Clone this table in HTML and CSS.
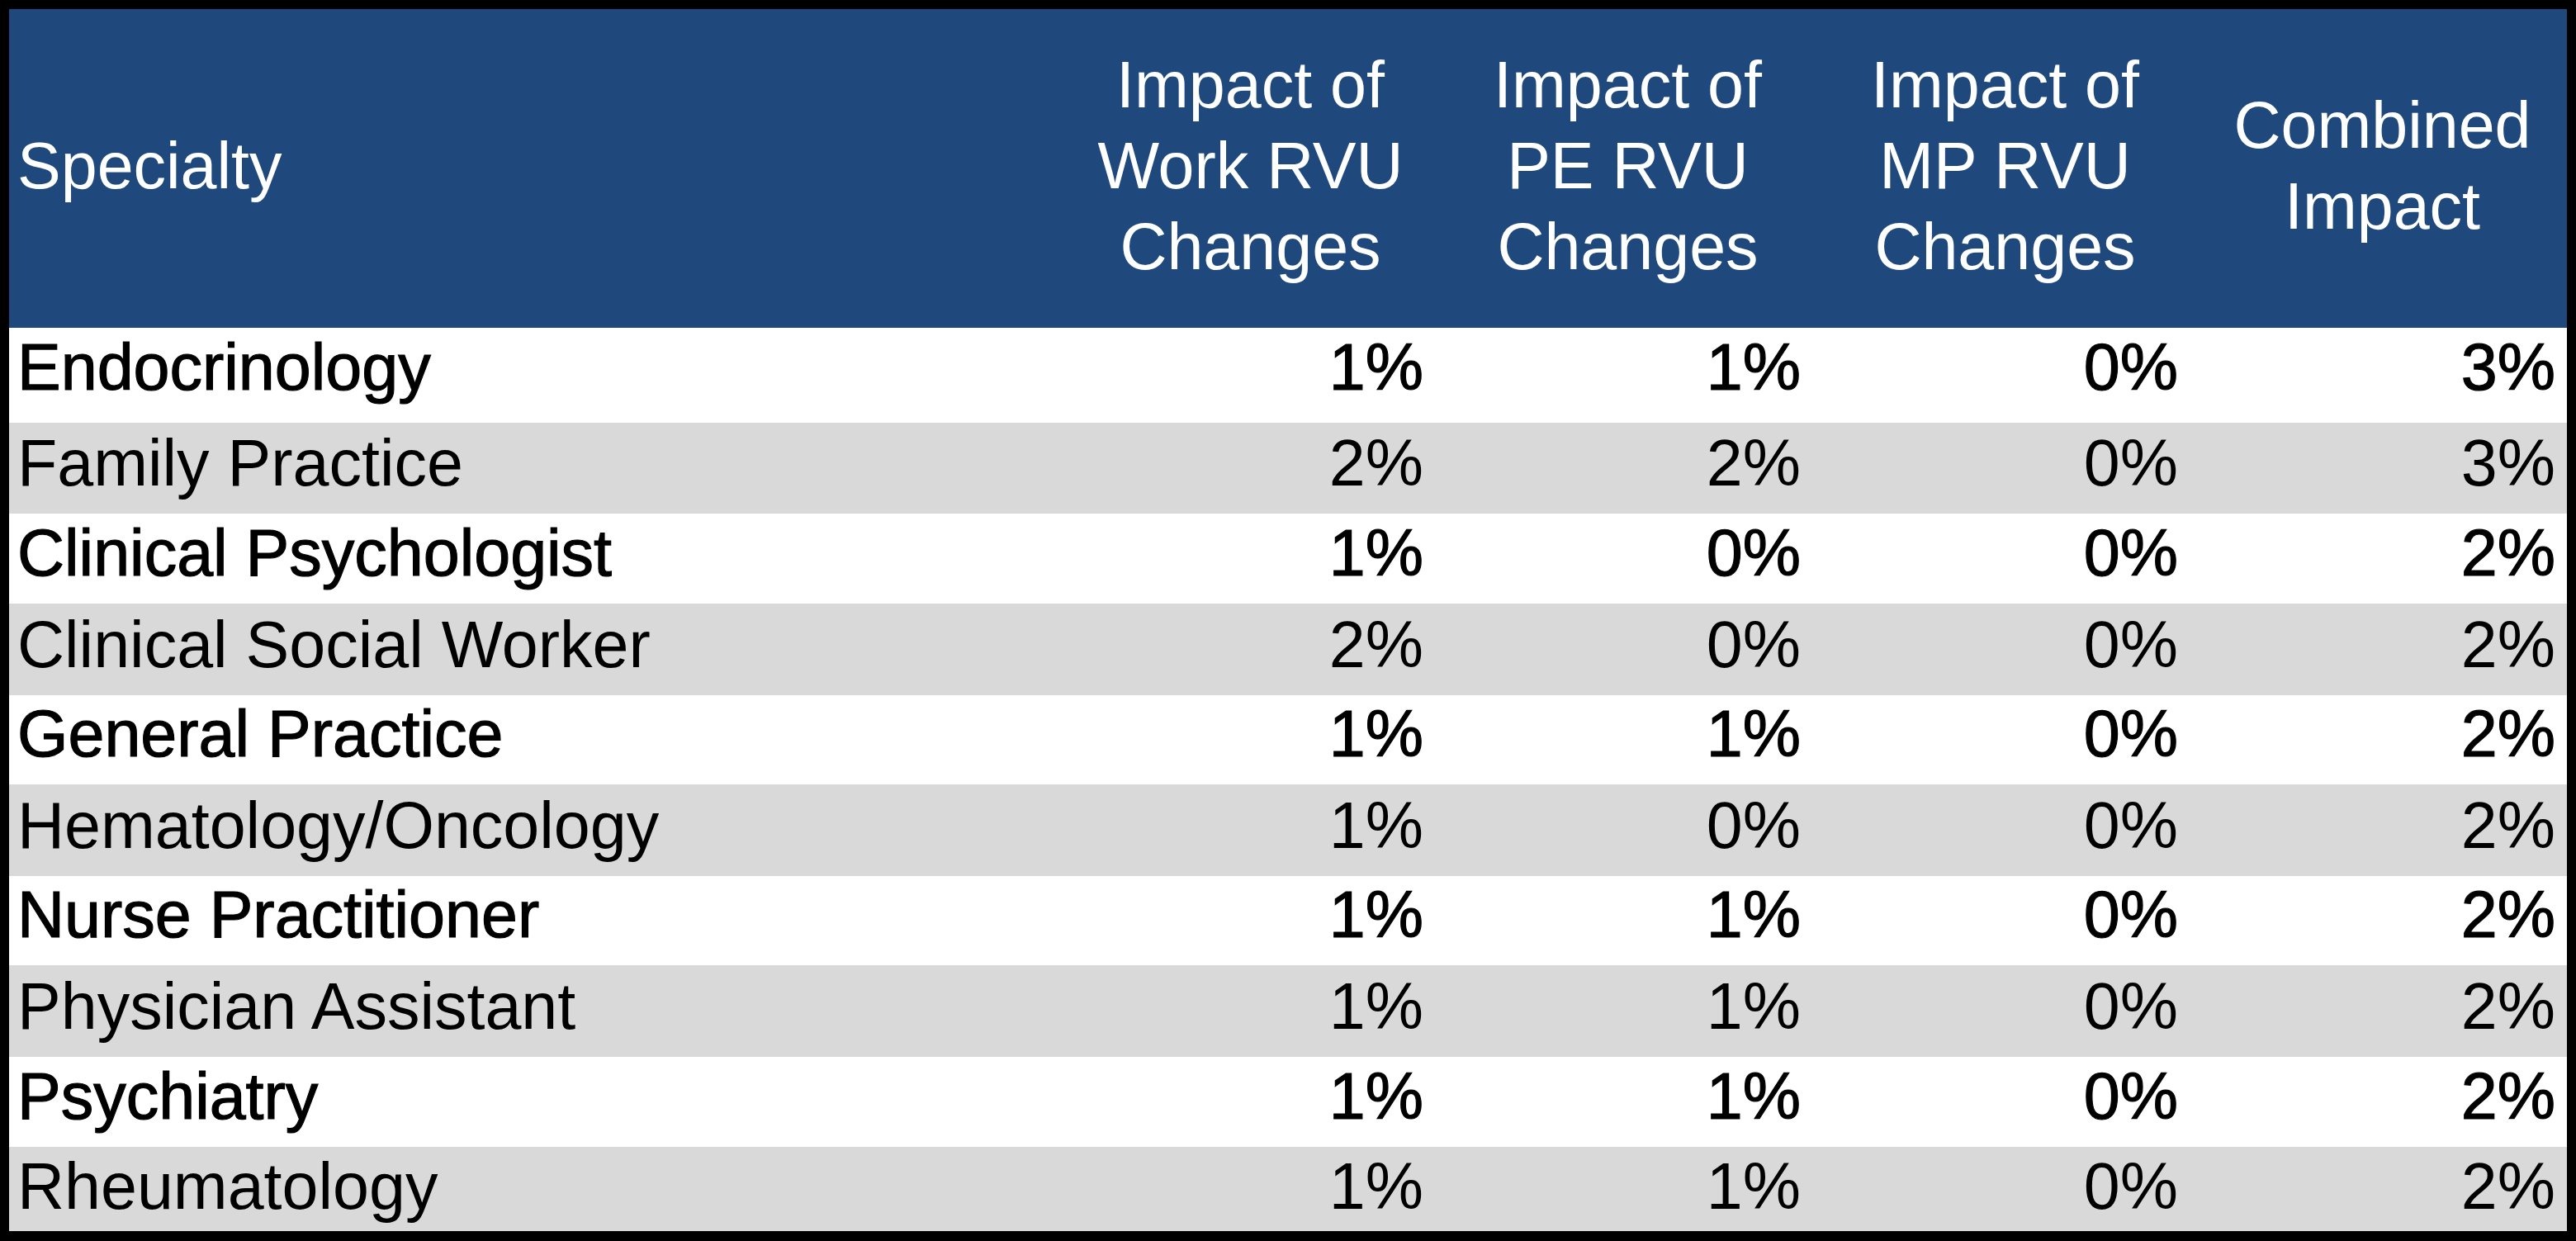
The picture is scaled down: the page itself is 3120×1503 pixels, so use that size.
FILE: index.html
```html
<!DOCTYPE html>
<html>
<head>
<meta charset="utf-8">
<link rel="stylesheet" href="styles.css">
</head>
<body>
<div class="frame">
<table class="impact">
  <colgroup>
    <col class="c-spec"><col class="c-num"><col class="c-num"><col class="c-num"><col class="c-num">
  </colgroup>
  <thead>
    <tr class="head">
      <th class="spec">Specialty</th>
      <th class="num">Impact of<br>Work RVU<br>Changes</th>
      <th class="num">Impact of<br>PE RVU<br>Changes</th>
      <th class="num">Impact of<br>MP RVU<br>Changes</th>
      <th class="num">Combined<br>Impact</th>
    </tr>
  </thead>
  <tbody>
    <tr class="odd r1"><td>Endocrinology</td><td>1%</td><td>1%</td><td>0%</td><td>3%</td></tr>
    <tr class="even r2"><td>Family Practice</td><td>2%</td><td>2%</td><td>0%</td><td>3%</td></tr>
    <tr class="odd r3"><td>Clinical Psychologist</td><td>1%</td><td>0%</td><td>0%</td><td>2%</td></tr>
    <tr class="even r4"><td>Clinical Social Worker</td><td>2%</td><td>0%</td><td>0%</td><td>2%</td></tr>
    <tr class="odd r5"><td>General Practice</td><td>1%</td><td>1%</td><td>0%</td><td>2%</td></tr>
    <tr class="even r6"><td>Hematology/Oncology</td><td>1%</td><td>0%</td><td>0%</td><td>2%</td></tr>
    <tr class="odd r7"><td>Nurse Practitioner</td><td>1%</td><td>1%</td><td>0%</td><td>2%</td></tr>
    <tr class="even r8"><td>Physician Assistant</td><td>1%</td><td>1%</td><td>0%</td><td>2%</td></tr>
    <tr class="odd r9"><td>Psychiatry</td><td>1%</td><td>1%</td><td>0%</td><td>2%</td></tr>
    <tr class="even r10"><td>Rheumatology</td><td>1%</td><td>1%</td><td>0%</td><td>2%</td></tr>
  </tbody>
</table>
</div>
</body>
</html>
```
FILE: styles.css
```css
html, body {
  margin: 0;
  padding: 0;
  background: #000;
}
.frame {
  padding: 11px 11px 12px 11px;
  width: 3098px;
}
.impact {
  border-collapse: collapse;
  border-spacing: 0;
  table-layout: fixed;
  width: 3098px;
  font-family: "Liberation Sans", Arial, sans-serif;
  font-size: 79px;
}
.c-spec { width: 1270px; }
.c-num { width: 457px; }

.head { height: 386px; background: #1f497d; }
.head th {
  color: #fff;
  font-weight: normal;
  line-height: 98px;
  vertical-align: middle;
  padding: 0 0 6px 0;
}
.head th.spec { text-align: left; padding-left: 10px; }
.head th.num { text-align: center; padding-left: 10px; }

tbody td {
  color: #000;
  line-height: 92px;
  vertical-align: bottom;
  padding: 0 14px 15px 0;
  text-align: right;
  white-space: nowrap;
}
tbody td:first-child { text-align: left; padding-left: 10px; }

.odd { background: #fff; }
.odd td { -webkit-text-stroke: 1.2px #000; }
.even { background: #d9d9d9; }

.r1 { height: 115px; }
.r1 td { padding-bottom: 21px; }
.r2 { height: 110px; }
.r3 { height: 109px; }
.r4 { height: 111px; }
.r5 { height: 108px; }
.r6 { height: 111px; }
.r7 { height: 108px; }
.r8 { height: 111px; }
.r9 { height: 109px; }
.r10 { height: 102px; }
.r10 td { padding-bottom: 8px; }
```
